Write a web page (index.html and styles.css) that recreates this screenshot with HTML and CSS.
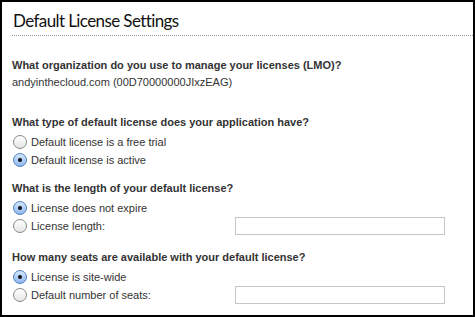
FILE: index.html
```html
<!DOCTYPE html>
<html lang="en">
<head>
    <meta charset="UTF-8">
    <title>Default License Settings</title>
    <link rel="stylesheet" href="styles.css">
</head>
<body>
    <div class="frame">
        <h2 class="title">Default License Settings</h2>

        <div class="section first">
            <div class="question">What organization do you use to manage your licenses (LMO)?</div>
            <div class="value">andyinthecloud.com (00D70000000JIxzEAG)</div>
        </div>

        <div class="section">
            <div class="question">What type of default license does your application have?</div>
            <label class="option"><span class="radio"></span>Default license is a free trial</label>
            <label class="option"><span class="radio checked"></span>Default license is active</label>
        </div>

        <div class="section">
            <div class="question">What is the length of your default license?</div>
            <label class="option"><span class="radio checked"></span>License does not expire</label>
            <div class="option">
                <span class="radio"></span>
                <span class="option-label">License length:</span>
                <span class="field"></span>
            </div>
        </div>

        <div class="section seats">
            <div class="question">How many seats are available with your default license?</div>
            <label class="option"><span class="radio checked"></span>License is site-wide</label>
            <div class="option">
                <span class="radio"></span>
                <span class="option-label">Default number of seats:</span>
                <span class="field"></span>
            </div>
        </div>
    </div>
</body>
</html>
```

FILE: styles.css
```css
body {
    margin: 0;
    background: #fff;
    font-family: "Liberation Sans", Arial, sans-serif;
    color: #222;
}

.frame {
    width: 475px;
    height: 317px;
    box-sizing: border-box;
    border: 2px solid #000;
    padding: 0 0 0 10px;
    overflow: hidden;
}

.title {
    margin: 0;
    padding: 9px 0 4px 1px;
    font-family: "Lato", "Noto Sans", sans-serif;
    font-size: 17px;
    font-weight: 400;
    letter-spacing: -0.6px;
    line-height: 20px;
    color: #111;
    border-bottom: 1px dotted #999;
}

.section {
    margin-top: 11px;
}

.section.first {
    margin-top: 21px;
    margin-bottom: 24px;
}

.section.seats {
    margin-top: 14px;
}

.question {
    font-size: 11px;
    font-weight: 700;
    line-height: 16px;
    color: #333;
    margin-bottom: 3px;
}

.first .question {
    margin-bottom: 1px;
}

.value {
    font-size: 11px;
    line-height: 16px;
    color: #333;
}

.option {
    display: flex;
    align-items: center;
    height: 18px;
    font-size: 11px;
    color: #333;
}

.option-label {
    width: 204px;
}

.radio {
    width: 12px;
    height: 12px;
    margin: 0 4px 0 1px;
    border: 1px solid #8a8a8a;
    border-radius: 50%;
    background: linear-gradient(#fff, #e6e6e6);
    display: flex;
    align-items: center;
    justify-content: center;
    flex-shrink: 0;
}

.radio.checked {
    border-color: #4f7fbf;
    background: linear-gradient(#d4e6fb, #8fb8ee);
}

.radio.checked::after {
    content: "";
    width: 4px;
    height: 4px;
    border-radius: 50%;
    background: #111;
}

.field {
    width: 208px;
    height: 16px;
    border: 1px solid #c6c6c6;
    background: #fff;
}
```
